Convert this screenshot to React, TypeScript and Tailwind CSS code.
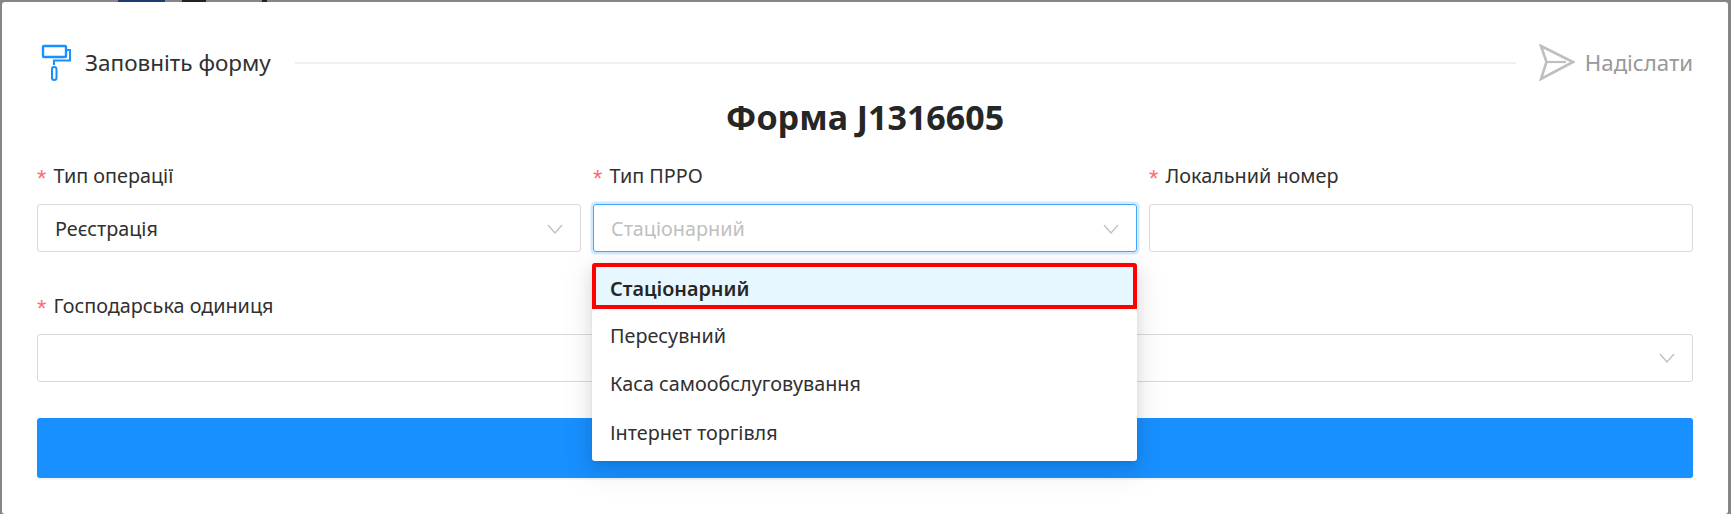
const Chevron = () => (
  <svg width="16" height="10" viewBox="0 0 16 10" fill="none" className="shrink-0">
    <path d="M1 1L8 9L15 1" stroke="#bfbfbf" strokeWidth="1.3" />
  </svg>
);

const Label = ({ text }: { text: string }) => (
  <div className="flex items-center h-[24px] mb-[16px] text-[19.8px] leading-[24px] text-[#303030]">
    <span className="w-[16.5px] shrink-0 pt-[5px] text-[#ff6b6d] text-[24px] font-['Liberation_Sans',sans-serif]">*</span>
    {text}
  </div>
);

const Roller = () => (
  <svg width="32" height="38" viewBox="0 0 32 38" fill="none" className="shrink-0">
    <rect x="3" y="2" width="23" height="11" rx="1" stroke="#1890ff" strokeWidth="2.4" />
    <path d="M26 6H30V16.5H14V21" stroke="#1890ff" strokeWidth="2" />
    <rect x="12" y="23" width="4.5" height="13" rx="2.2" stroke="#1890ff" strokeWidth="2" />
  </svg>
);

const Send = () => (
  <svg width="36" height="38" viewBox="0 0 36 38" fill="none" className="shrink-0">
    <path d="M2 2L34 18L2 35L7.5 18L2 2Z" stroke="#bfbfbf" strokeWidth="2.6" strokeLinejoin="miter" />
    <path d="M7.5 18H27" stroke="#bfbfbf" strokeWidth="2.2" />
  </svg>
);

const options = ["Пересувний", "Каса самообслуговування", "Інтернет торгівля"];

export default function App() {
  return (
    <div
      className="relative h-[514px] w-[1731px] overflow-hidden bg-[#868686] pt-[2px] pl-[2px] pr-[3px]"
      style={{ fontFamily: '"Noto Sans", "Open Sans", sans-serif' }}
    >
      <div className="absolute left-[118px] top-0 h-[2px] w-[47px] bg-[#1f3a70]" />
      <div className="absolute left-[182px] top-0 h-[2px] w-[24px] bg-[#222222]" />
      <div className="absolute left-[262px] top-0 h-[2px] w-[5px] bg-[#222222]" />

      <div className="relative h-[512px] rounded-[3px] bg-white px-[35px] pt-[43px]">
        <div className="flex h-[36px] items-center">
          <div className="ml-[3px]"><Roller /></div>
          <span className="ml-[13px] text-[22.5px] leading-[28px] text-[#303030]">Заповніть форму</span>
          <div className="ml-[24px] mr-[23px] h-[2px] flex-1 bg-[#f0f0f0]" />
          <Send />
          <span className="ml-[10px] text-[22.2px] leading-[28px] text-[#999999]">Надіслати</span>
        </div>

        <h1 className="mt-[16px] text-center text-[34px] leading-[40px] font-bold text-[#262626]">Форма J1316605</h1>

        <div className="mt-[27px] grid grid-cols-3 gap-x-[12px]">
          <div>
            <Label text="Тип операції" />
            <div className="flex h-[48px] items-center justify-between rounded-[3px] border border-[#d9d9d9] pl-[17px] pr-[17px] pt-[2px] text-[19.8px] text-[#303030]">
              Реєстрація <Chevron />
            </div>
          </div>
          <div>
            <Label text="Тип ПРРО" />
            <div className="flex h-[48px] items-center justify-between rounded-[3px] border border-[#40a9ff] pl-[17px] pr-[17px] pt-[2px] text-[19.8px] text-[#bfbfbf] shadow-[0_0_0_2.5px_rgba(24,144,255,0.2)]">
              Стаціонарний <Chevron />
            </div>
          </div>
          <div>
            <Label text="Локальний номер" />
            <div className="h-[48px] rounded-[3px] border border-[#d9d9d9]" />
          </div>
        </div>

        <div className="mt-[42px] grid grid-cols-2 gap-x-[12px]">
          <div>
            <Label text="Господарська одиниця" />
            <div className="h-[48px] rounded-[3px] border border-[#d9d9d9]" />
          </div>
          <div className="pt-[40px]">
            <div className="flex h-[48px] items-center justify-end rounded-[3px] border border-[#d9d9d9] px-[17px]">
              <Chevron />
            </div>
          </div>
        </div>

        <div className="mt-[36px] h-[60px] rounded-[3px] bg-[#1890ff] shadow-[0_2px_0_rgba(0,0,0,0.045)]" />

        <div className="absolute left-[590px] top-[261px] w-[545px] overflow-hidden rounded-[3px] bg-white text-[19.8px] text-[#303030] shadow-[0_3px_6px_-4px_rgba(0,0,0,0.12),0_6px_16px_0_rgba(0,0,0,0.1),0_9px_28px_8px_rgba(0,0,0,0.06)]">
          <div className="flex h-[46px] items-center border-[4px] border-[#ff0000] bg-[#e6f7ff] pl-[14px] pt-[5px] font-semibold text-[#262626]">Стаціонарний</div>
          {options.map((o) => (
            <div key={o} className="flex h-[48.5px] items-center pl-[18px] pt-[5px]">{o}</div>
          ))}
          <div className="h-[6px]" />
        </div>
      </div>
    </div>
  );
}
